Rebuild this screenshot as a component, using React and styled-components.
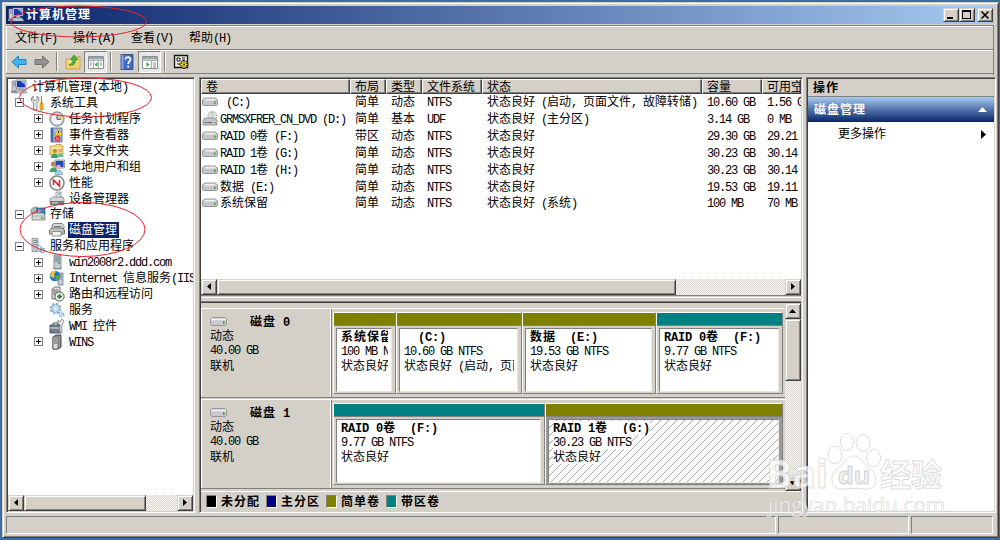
import React from "react";
import styled, { createGlobalStyle, css } from "styled-components";

const GlobalStyle = createGlobalStyle`
  * {
    box-sizing: border-box;
  }

  body {
    margin: 0;
    background: #3a6ea5;
    overflow: hidden;
  }
`;

const raised = css`
  background: #d4d0c8;
  border: 1px solid;
  border-color: #d4d0c8 #404040 #404040 #d4d0c8;
  box-shadow: inset 1px 1px 0 #fff, inset -1px -1px 0 #808080;
`;

const sunken = css`
  border: 1px solid;
  border-color: #808080 #fff #fff #808080;
  box-shadow: inset 1px 1px 0 #404040, inset -1px -1px 0 #d4d0c8;
  padding: 1px;
`;

const Desktop = styled.div`
  position: relative;
  width: 1000px;
  height: 540px;
  padding: 2px 1px 2px 2px;
  background: #3a6ea5;
  font-family: "Noto Sans CJK SC", sans-serif;
  font-size: 12px;
  line-height: 16px;
  color: #000;
  white-space: pre;
`;

const Window = styled.div`
  ${raised}
  height: 536px;
  padding: 3px 4px 3px 3px;
  display: flex;
  flex-direction: column;
`;

const Run = styled.span`
  display: block;
  width: fit-content;
  transform: translateY(-1px);
  letter-spacing: ${(p) => (p.$bold ? "1px" : "0")};
  font-weight: ${(p) => (p.$bold ? 700 : 400)};
`;

const Latin = styled.span`
  font-family: "Liberation Mono", monospace;
  font-size: 12px;
  line-height: 1;
  letter-spacing: ${(p) => (p.$bold ? "-0.2px" : "-1.2px")};
`;

const TitleBar = styled.div`
  height: 18px;
  display: flex;
  align-items: center;
  gap: 2px;
  padding: 0 1px 0 2px;
  color: #fff;
  background: linear-gradient(90deg, #0a246a, #a6caf0);
`;

const Controls = styled.div`
  margin-left: auto;
  display: flex;
`;

const ControlButton = styled.div`
  ${raised}
  width: 16px;
  height: 14px;
  margin-left: ${(p) => (p.$apart ? "2px" : "0")};

  svg {
    display: block;
  }
`;

const Bars = styled.div`
  margin-top: 1px;
  height: 50px;
  border-right: 1px solid #808080;
`;

const Bar = styled.div`
  height: ${(p) => p.$height}px;
  border-top: 1px solid #808080;
  border-bottom: ${(p) => (p.$last ? "1px solid #808080" : "none")};
  box-shadow: inset 1px 1px 0 #fff;
  display: flex;
  align-items: center;
  padding-left: 1px;
`;

const MenuItem = styled.div`
  width: 58px;
  padding-left: 8px;
`;

const ToolButton = styled.div`
  width: 23px;
  height: 22px;
  display: flex;
  align-items: center;
  justify-content: center;
  border: 1px solid;
  border-color: ${(p) => (p.$on ? "#808080 #fff #fff #808080" : "transparent")};
  background: ${(p) =>
    p.$on ? "repeating-conic-gradient(#fff 0 25%, #d9d6cf 0 50%) 0 0 / 2px 2px" : "none"};
`;

const Separator = styled.div`
  width: 2px;
  height: 19px;
  margin: 0 3px;
  border-left: 1px solid #808080;
  border-right: 1px solid #fff;
`;

const Panes = styled.div`
  display: grid;
  grid-template-columns: 189px 604px 188px;
  column-gap: 4px;
  height: 436px;
  margin-top: 2px;
`;

const TreePane = styled.div`
  ${sunken}
  background: #fff;
  display: flex;
  flex-direction: column;
`;

const TreeRows = styled.div`
  flex: 1;
  overflow: hidden;
`;

const TreeRow = styled.div`
  height: 15.95px;
  display: flex;
  align-items: center;
  padding-left: ${(p) => [3, 7, 26][p.$level]}px;

  > svg {
    flex: none;
    margin-right: ${(p) => (p.$level ? 3 : 4)}px;
  }
`;

const Expander = styled.div`
  flex: none;
  width: 9px;
  height: 9px;
  margin-right: 6px;
  border: 1px solid ${(p) => (p.$sign ? "#808080" : "transparent")};
  background:
    linear-gradient(#000, #000) center / ${(p) => (p.$sign ? "5px 1px" : "0 0")} no-repeat,
    linear-gradient(#000, #000) center / ${(p) => (p.$sign === "+" ? "1px 5px" : "0 0")} no-repeat;
`;

const TreeLabel = styled.div`
  padding: 0 2px 0 1px;
  height: 16px;
  background: ${(p) => (p.$selected ? "#0a246a" : "transparent")};
  color: ${(p) => (p.$selected ? "#fff" : "#000")};
`;

const ScrollTrack = styled.div`
  flex: none;
  display: flex;
  flex-direction: ${(p) => (p.$vertical ? "column" : "row")};
  ${(p) => (p.$vertical ? "width: 16px;" : "height: 16px;")}
  background: repeating-conic-gradient(#f4f3f0 0 25%, #dedbd5 0 50%) 0 0 / 2px 2px;
`;

const ScrollButton = styled.div`
  ${raised}
  flex: none;
  width: 16px;
  height: 16px;

  svg {
    display: block;
  }
`;

const ScrollThumb = styled.div`
  ${raised}
  flex: none;
  ${(p) => (p.$vertical ? `height: ${p.$size}px;` : `width: ${p.$size}px;`)}
`;

const Spring = styled.div`
  flex: 1;
`;

const MainPane = styled.div`
  ${sunken}
  background: #d4d0c8;
  display: flex;
  flex-direction: column;
  overflow: hidden;
`;

const Table = styled.div`
  height: 200px;
  flex: none;
  background: #fff;
  overflow: hidden;
`;

const TableRow = styled.div`
  display: grid;
  grid-template-columns: 149px 36px 36px 60px 220px 60px 39px;
  height: 16.85px;
`;

const HeaderRow = styled(TableRow)`
  height: 15px;
`;

const HeaderCell = styled.div`
  background: #d4d0c8;
  border: 1px solid;
  border-color: #fff #404040 #404040 #fff;
  box-shadow: inset -1px -1px 0 #808080;
  padding-left: 4px;
  line-height: 14px;
  overflow: hidden;
`;

const Cell = styled.div`
  display: flex;
  align-items: center;
  gap: 2px;
  padding-left: ${(p) => (p.$first ? 1 : 5)}px;
  overflow: hidden;

  svg {
    flex: none;
  }
`;

const Splitter = styled.div`
  flex: none;
  height: 8px;
  border-top: 1px solid #808080;
  border-bottom: 1px solid #404040;
  box-shadow: inset 0 -1px 0 #808080;
  padding-top: 1px;

  &::before {
    content: "";
    display: block;
    height: 1px;
    background: #fff;
  }
`;

const DiskArea = styled.div`
  height: 188px;
  flex: none;
  display: flex;
`;

const DiskList = styled.div`
  width: 584px;
  padding-top: 5px;
  display: flex;
  flex-direction: column;
  gap: 1px;
`;

const DiskRow = styled.div`
  height: 90px;
  display: flex;
  border-top: 1px solid #fff;
  border-bottom: 1px solid #808080;
`;

const DiskInfo = styled.div`
  width: 131px;
  padding: 5px 0 0 8px;
  border-left: 1px solid #fff;
  border-right: 1px solid #808080;
  box-shadow: inset -1px 0 0 #fff;
`;

const DiskName = styled.div`
  display: flex;
  align-items: center;
  gap: 23px;
  height: 15px;

  svg {
    flex: none;
  }
`;

const Line = styled.div`
  height: ${(p) => p.$height || 14}px;
  line-height: ${(p) => p.$height || 14}px;
`;

const Volumes = styled.div`
  display: flex;
  padding: 3px 0 3px 1px;
`;

const Volume = styled.div`
  width: ${(p) => p.$width}px;
  display: flex;
  flex-direction: column;
  border: 1px solid;
  border-color: #fff #808080 #808080 #fff;
  background: ${(p) => (p.$selected ? "#9c9993" : "#d4d0c8")};
`;

const VolumeBar = styled.div`
  height: 13px;
  flex: none;
  background: ${(p) => p.$color};
  border-bottom: 1px solid #808080;
`;

const VolumeBox = styled.div`
  flex: 1;
  margin: 2px 3px 1px 2px;
  border: 1px solid;
  border-color: #808080 #e8e6e1 #e8e6e1 #808080;
  padding: 1px 3px 0 4px;
  background: ${(p) =>
    p.$selected
      ? "repeating-linear-gradient(135deg, #fff 0 5.1px, #a8a8a8 5.1px 5.66px)"
      : "#fff"};
`;

const VolumeText = styled.div`
  overflow: hidden;

  > div > span {
    background: ${(p) => (p.$selected ? "#fff" : "none")};
  }
`;

const Legend = styled.div`
  flex: 1;
  border-top: 1px solid #fff;
  display: flex;
  align-items: center;
  padding-left: 5px;
`;

const LegendItem = styled.div`
  width: 60px;
  display: flex;
  align-items: center;
  gap: 4px;
`;

const Swatch = styled.div`
  width: 11px;
  height: 13px;
  background: ${(p) => p.$color};
  border: 1px solid;
  border-color: #808080 #fff #fff #808080;
`;

const ActionPane = styled.div`
  ${sunken}
  margin-left: -1px;
  margin-right: -1px;
  background: #fff;
`;

const ActionHeader = styled.div`
  height: 18px;
  padding: 1px 0 0 5px;
  background: #d4d0c8;
  border-bottom: 1px solid #808080;
`;

const ActionTitle = styled.div`
  height: 25px;
  display: flex;
  align-items: center;
  justify-content: space-between;
  padding: 0 7px 0 6px;
  color: #fff;
  background: linear-gradient(#a6caf0, #5673ab 50%, #0a246a);
`;

const ActionItem = styled.div`
  height: 24px;
  display: flex;
  align-items: center;
  justify-content: space-between;
  padding: 0 8px 0 30px;
`;

const StatusBar = styled.div`
  margin-top: 3px;
  height: 18px;
  display: grid;
  grid-template-columns: 770px 131px 82px;
  column-gap: 2px;
`;

const StatusCell = styled.div`
  border: 1px solid;
  border-color: #808080 #fff #fff #808080;
`;

const Overlay = styled.svg`
  position: absolute;
  left: 0;
  top: 0;
  pointer-events: none;
`;

// ASCII takes half the width of a Chinese character
const T = ({ children, bold }) => (
  <Run $bold={bold}>
    {children.split(/([\x20-\x7e]+)/).map((part, i) =>
      i % 2 ? (
        <Latin key={i} $bold={bold}>
          {part}
        </Latin>
      ) : (
        part
      )
    )}
  </Run>
);

const icons = {
  computer: (
    <>
      <path d="M1 2h5v10H1z" fill="#c9ccd0" stroke="#7b8088" strokeWidth=".7" />
      <path d="M2 4h3M2 6h3" stroke="#667" strokeWidth=".7" />
      <path d="M5 1h10v8H5z" fill="#dfe5ee" stroke="#6a7484" strokeWidth=".7" />
      <path d="M6 2h8v6H6z" fill="#1835b8" />
      <path d="M9 2h5v4z" fill="#7da4ee" />
      <path d="M8 9h4v2H8zM4 11h10l2 3H3z" fill="#c9ced6" stroke="#737a84" strokeWidth=".6" />
      <path d="M0 12h6v2H0z" fill="#8c9098" />
    </>
  ),
  tools: (
    <>
      <path d="M3 1v4l2 1 2-1V1l2 2v3L7 8v7H3.5V8L1.500 6V3z" fill="#e4e6e8" stroke="#777" strokeWidth=".8" />
      <path d="M11.500 1v8" stroke="#888" strokeWidth="1.200" />
      <path d="M10 8h3v6l-1.500 1.500L10 14z" fill="#f6b81c" stroke="#b67c05" strokeWidth=".7" />
    </>
  ),
  clock: (
    <>
      <circle cx="8" cy="8" r="7.200" fill="#b9bcc0" stroke="#777b82" strokeWidth=".8" />
      <circle cx="8" cy="8" r="5.500" fill="#f3f7fc" />
      <path d="M8 8V2.500A5.500 5.500 0 0 1 13.500 8z" fill="#f1c982" />
      <path d="M8 4v4.300h4" fill="none" stroke="#3b5a92" />
    </>
  ),
  event: (
    <>
      <path d="M2 1h11v14H2z" fill="#a9c3e6" stroke="#466ba5" strokeWidth=".9" />
      <path d="M2 1h2.500v14H2z" fill="#4d6fa7" />
      <path d="M9.500 1.500l4 6.500h-8z" fill="#ffdc38" stroke="#b18b00" strokeWidth=".6" />
      <path d="M9.500 4v2.500" stroke="#222" />
      <circle cx="8.500" cy="11.500" r="3" fill="#d9343a" />
      <path d="M7.300 10.300l2.400 2.400m0-2.400l-2.400 2.400" stroke="#fff" strokeWidth=".8" />
    </>
  ),
  shares: (
    <>
      <path d="M1 3h5l1-1.500h5V3h2v9H1z" fill="#f2d57b" stroke="#ba9230" strokeWidth=".7" />
      <path d="M2 5h11" stroke="#fff3bf" />
      <circle cx="6" cy="8" r="2" fill="#b98253" />
      <path d="M2 15c0-6 7-6 7 0z" fill="#37a66b" />
      <circle cx="11.500" cy="7.500" r="1.800" fill="#d9a77d" />
      <path d="M8.500 14c0-5 6-5 6 0z" fill="#72b9a4" />
    </>
  ),
  users: (
    <>
      <path d="M6 1h9.500v8H6z" fill="#d5deed" stroke="#65738d" strokeWidth=".7" />
      <path d="M7 2h7.500v6H7z" fill="#2246c0" />
      <circle cx="4.500" cy="5" r="2.600" fill="#b98253" />
      <path d="M.5 13c0-6 8-6 8 0z" fill="#3fa564" />
      <circle cx="9.500" cy="8" r="2.300" fill="#e0b792" />
      <path d="M6 15.500c0-6 7.500-6 7.500 0z" fill="#a6cfe9" stroke="#5b86ab" strokeWidth=".5" />
    </>
  ),
  perf: (
    <>
      <circle cx="8" cy="8" r="7" fill="#fff" stroke="#83868a" strokeWidth="1.600" />
      <path d="M4.500 10V5l6 6V5" fill="none" stroke="#cf252d" strokeWidth="1.600" />
    </>
  ),
  device: (
    <>
      <path d="M7 1h5v7H7z" fill="#e4e7eb" stroke="#7b8088" strokeWidth=".7" />
      <path d="M1 8l3-2h9l2 2v3H1z" fill="#d4d7da" stroke="#707478" strokeWidth=".7" />
      <path d="M1 10h14v4H1z" fill="#777b80" />
      <path d="M3 12h6" stroke="#e4e4e4" />
      <path d="M9 3h2" stroke="#3a7ad0" />
    </>
  ),
  storage: (
    <>
      <path d="M1 5c0-3 3-4 6-4v6H1z" fill="#aeb5bb" stroke="#727a80" strokeWidth=".7" />
      <path d="M7 2h8v6H7z" fill="#2f86c7" stroke="#1e5d92" strokeWidth=".7" />
      <path d="M8 3h5L8 7z" fill="#8fd2ee" />
      <path d="M2 9l2-2h9l2 2v5H2z" fill="#d9dbdc" stroke="#73777a" strokeWidth=".8" />
      <path d="M2 10h13" stroke="#999" strokeWidth=".6" />
      <path d="M11 12h2.500" stroke="#24b43b" strokeWidth="1.600" />
    </>
  ),
  disk: (
    <>
      <path d="M3 3l2-1.500h8l2 2V7H3z" fill="#d8d8d6" stroke="#6c6c6a" strokeWidth=".8" />
      <path d="M0.500 8L3 6h10l2.500 2v4H.5z" fill="#c4c4c2" stroke="#5f5f5e" strokeWidth=".8" />
      <path d="M3 9.500h9V14H3z" fill="#efefee" stroke="#707070" strokeWidth=".7" />
      <path d="M5 4.500h7" stroke="#777" />
      <path d="M13 10h1.500" stroke="#26a53a" />
    </>
  ),
  services: (
    <>
      <path d="M2 .5h6v13H2z" fill="#cdd2d6" stroke="#7b848c" strokeWidth=".7" />
      <path d="M3 2.500h4M3 4.500h4M3 6.500h4" stroke="#727f8b" strokeWidth=".8" />
      <path d="M6 4h1.500" stroke="#2fb645" />
      <circle cx="8" cy="10.500" r="3" fill="none" stroke="#8db2cf" strokeWidth="2" strokeDasharray="1.500 .8" />
      <circle cx="12.500" cy="12.500" r="2" fill="none" stroke="#6c9fc7" strokeWidth="2" strokeDasharray="1.200 .6" />
    </>
  ),
  server: (
    <>
      <path d="M5 1h7v14H5z" fill="#c6cdd0" stroke="#6d7880" strokeWidth=".8" />
      <path d="M6 3h5M6 5h5M6 7h5" stroke="#67777f" />
      <path d="M9 9h2" stroke="#29b13e" strokeWidth="1.500" />
      <path d="M4 14.500h9" stroke="#8a9298" />
    </>
  ),
  iis: (
    <>
      <path d="M9 3h5v12H9z" fill="#c3cad0" stroke="#6f7a84" strokeWidth=".8" />
      <path d="M10 5h3M10 7h3M10 9h3" stroke="#69747e" strokeWidth=".8" />
      <circle cx="6" cy="6" r="5.300" fill="#2673cf" />
      <path d="M2 3c2-3 5-2 5-1L5 4l1 2-2 2-3-2z" fill="#f0c22c" />
      <path d="M7 6l3-1 1 2-3 4-2-2z" fill="#4cae3f" />
    </>
  ),
  routing: (
    <>
      <path d="M3 3l3-2h5v12H3z" fill="#dfe0dd" stroke="#555" strokeWidth=".8" />
      <path d="M4 4h5M4 6h5M4 8h3" stroke="#666" />
      <circle cx="10.500" cy="10.500" r="4.600" fill="#fff" stroke="#4a4a4a" />
      <path d="M10.500 8v5M8 10.500h5" stroke="#23892e" strokeWidth="1.800" />
    </>
  ),
  gears: (
    <>
      <circle cx="6.500" cy="6.500" r="4.500" fill="none" stroke="#8db6d8" strokeWidth="3" strokeDasharray="2.200 1.300" />
      <circle cx="6.500" cy="6.500" r="3.800" fill="#e8f3fb" stroke="#79a5ca" />
      <circle cx="6.500" cy="6.500" r="1.800" fill="#fff" stroke="#8db0cc" strokeWidth=".7" />
      <circle cx="12.500" cy="12.500" r="2" fill="#e8f3fb" stroke="#8cb4d4" strokeWidth="2" strokeDasharray="1.300 .7" />
    </>
  ),
  wmi: (
    <>
      <path d="M1 7h11v8H1z" fill="#71808d" stroke="#3d4852" strokeWidth=".8" />
      <path d="M4 7V5h5v2" fill="none" stroke="#47525c" />
      <path d="M1 10h11" stroke="#dce2e7" />
      <path d="M9 2l2 2 2-3 2 2-2 4v8h-2V7L9 5z" fill="#e6e8ea" stroke="#777" strokeWidth=".7" />
    </>
  ),
  wins: (
    <>
      <path d="M4 3l3-2h5v12l-3 2H4z" fill="#9b9c9a" stroke="#222" strokeWidth=".8" />
      <path d="M4 3h5v12H4z" fill="#dcdcda" stroke="#444" strokeWidth=".7" />
      <path d="M5 5h3M5 7h3M5 9h3" stroke="#555" />
    </>
  ),
  volume: (
    <>
      <path d="M.5 7c0-2 2-3 3-3h9c1 0 3 1 3 3v3c0 .8-.6 1.500-1.500 1.500H2C1 11.500.5 11 .5 10z" fill="#c6c6ca" stroke="#828286" strokeWidth=".8" />
      <path d="M2 6c1-1 2-1.300 3-1.300h6c1 0 2 .3 3 1.300-1 .8-11 .8-12 0z" fill="#f0f0f2" />
      <path d="M12 7.500h1.500v2.500H12z" fill="#35a52d" />
    </>
  ),
  dvd: (
    <>
      <circle cx="10.500" cy="5" r="4.500" fill="#e2e2ec" stroke="#a4a4ae" strokeWidth=".7" />
      <path d="M10.500 5l-2-4 3-.5z" fill="#9fd4a7" />
      <circle cx="10.500" cy="5" r="1.200" fill="#fff" stroke="#999" strokeWidth=".5" />
      <path d="M1 9l2-2h9l3 2v5H1z" fill="#c4c4c8" stroke="#77777b" strokeWidth=".7" />
      <path d="M3 11.500h7" stroke="#555" strokeWidth="1.200" strokeDasharray="2 .5" />
      <path d="M12.500 11.500H14" stroke="#35a52d" />
    </>
  ),
  back: <path d="M1 8l6.500-6v3.500H15v5H7.500V14z" fill="#43b3ec" stroke="#2083c4" />,
  forward: <path d="M15 8L8.500 2v3.500H1v5h7.500V14z" fill="#929292" stroke="#707070" />,
  up: (
    <>
      <path d="M1 5h5l1.500-2H15v12H1z" fill="#f4cf71" stroke="#c7973a" strokeWidth=".8" />
      <path d="M2 7h12" stroke="#fff0ba" />
      <path d="M4 11c3-1 4-3 4-5H5.500L9 1l4 5h-2.500c0 4-2 6-6.500 5z" fill="#40b840" stroke="#258528" strokeWidth=".6" />
    </>
  ),
  paneLeft: (
    <>
      <path d="M.5 2.500h15v12H.5z" fill="#fff" stroke="#8a8f94" />
      <path d="M1 3h14v2.500H1z" fill="#9ba5ae" />
      <path d="M1 6.500h14M5.500 7v7M10.500 7v7" stroke="#a9b0b6" />
      <path d="M2 9h2M2 11h2M12 9h2M12 11h2" stroke="#7a8ea2" />
      <path d="M9.500 8v5l-3-2.500z" fill="#2faa37" />
    </>
  ),
  paneRight: (
    <>
      <path d="M.5 2.500h15v12H.5z" fill="#fff" stroke="#8a8f94" />
      <path d="M1 3h14v2.500H1z" fill="#9ba5ae" />
      <path d="M1 6.500h14M9.500 7v7" stroke="#a9b0b6" />
      <path d="M11 9h3M11 11h3M11 13h3" stroke="#7a8ea2" />
      <path d="M4.500 8v5l3-2.500z" fill="#2faa37" />
    </>
  ),
  help: (
    <>
      <path d="M2 .5h12v15H2z" fill="#4169c6" stroke="#26458c" strokeWidth=".8" />
      <path d="M2.500 1h2v14h-2z" fill="#89a8e4" />
      <path d="M6.500 5.500c0-3.500 5-3 5 0 0 2-2.300 2-2.300 4.500M9.200 11.500v2" fill="none" stroke="#fff" strokeWidth="1.800" />
    </>
  ),
  settings: (
    <>
      <path d="M1.500 1.500h13v12h-13z" fill="#efeee8" stroke="#111" strokeWidth="1.300" />
      <path d="M4 4h3v3H4zM9 4h3M9 6h3M4 10h3" fill="none" stroke="#222" />
      <path d="M11 6v9M6.500 10.500h9M8 7.500l6 6M14 7.500l-6 6" stroke="#222" strokeWidth="2.200" />
      <path d="M11 7v7M7.500 10.500h7M8.500 8l5 5M13.500 8l-5 5" stroke="#ffdf22" strokeWidth="1.200" />
      <circle cx="11" cy="10.500" r="1" fill="#222" />
    </>
  ),
};

const Icon = ({ name }) => (
  <svg width="16" height="16" viewBox="0 0 16 16">
    {icons[name]}
  </svg>
);

const DriveIcon = () => (
  <svg width="17" height="9" viewBox="0 0 17 9">
    <path d="M.5 2L2 .5h13L16.500 2v5.500L15 8.500H2L.5 7.500z" fill="#c9c9cd" stroke="#98989c" />
    <path d="M1 2.500h15" stroke="#f3f3f5" strokeWidth="1.500" />
    <path d="M13 4h1.500v3H13z" fill="#35b02d" />
  </svg>
);

const arrowPaths = {
  left: "M9 3v7L5 6.500z",
  right: "M5 3v7l4-3.500z",
  up: "M3 9h7L6.500 5z",
  down: "M3 5h7L6.500 9z",
};

const Arrow = ({ to }) => (
  <ScrollButton>
    <svg width="14" height="14">
      <path d={arrowPaths[to]} />
    </svg>
  </ScrollButton>
);

const menus = ["文件(F)", "操作(A)", "查看(V)", "帮助(H)"];

const tree = [
  [0, "", "computer", "计算机管理(本地)"],
  [1, "-", "tools", "系统工具"],
  [2, "+", "clock", "任务计划程序"],
  [2, "+", "event", "事件查看器"],
  [2, "+", "shares", "共享文件夹"],
  [2, "+", "users", "本地用户和组"],
  [2, "+", "perf", "性能"],
  [2, "", "device", "设备管理器"],
  [1, "-", "storage", "存储"],
  [2, "", "disk", "磁盘管理"],
  [1, "-", "services", "服务和应用程序"],
  [2, "+", "server", "win2008r2.ddd.com"],
  [2, "+", "iis", "Internet 信息服务(IIS)"],
  [2, "+", "routing", "路由和远程访问"],
  [2, "", "gears", "服务"],
  [2, "", "wmi", "WMI 控件"],
  [2, "+", "wins", "WINS"],
];

const columns = ["卷", "布局", "类型", "文件系统", "状态", "容量", "可用空间"];

const volumes = [
  [" (C:)", "简单", "动态", "NTFS", "状态良好 (启动, 页面文件, 故障转储)", "10.60 GB", "1.56 GB"],
  ["GRMSXFRER_CN_DVD (D:)", "简单", "基本", "UDF", "状态良好 (主分区)", "3.14 GB", "0 MB"],
  ["RAID 0卷 (F:)", "带区", "动态", "NTFS", "状态良好", "29.30 GB", "29.21"],
  ["RAID 1卷 (G:)", "简单", "动态", "NTFS", "状态良好", "30.23 GB", "30.14"],
  ["RAID 1卷 (H:)", "简单", "动态", "NTFS", "状态良好", "30.23 GB", "30.14"],
  ["数据 (E:)", "简单", "动态", "NTFS", "状态良好", "19.53 GB", "19.11"],
  ["系统保留", "简单", "动态", "NTFS", "状态良好 (系统)", "100 MB", "70 MB"],
];

const OLIVE = "#808000";
const TEAL = "#008080";

const disks = [
  {
    name: "磁盘 0",
    parts: [
      { width: 63, color: OLIVE, name: "系统保留", size: "100 MB NTFS", state: "状态良好" },
      { width: 126, color: OLIVE, name: "  (C:)", size: "10.60 GB NTFS", state: "状态良好 (启动, 页面文件" },
      { width: 134, color: OLIVE, name: "数据  (E:)", size: "19.53 GB NTFS", state: "状态良好" },
      { width: 127, color: TEAL, name: "RAID 0卷  (F:)", size: "9.77 GB NTFS", state: "状态良好" },
    ],
  },
  {
    name: "磁盘 1",
    parts: [
      { width: 212, color: TEAL, name: "RAID 0卷  (F:)", size: "9.77 GB NTFS", state: "状态良好" },
      { width: 238, color: OLIVE, name: "RAID 1卷  (G:)", size: "30.23 GB NTFS", state: "状态良好", selected: true },
    ],
  },
];

const legend = [
  ["#000", "未分配"],
  ["#000080", "主分区"],
  [OLIVE, "简单卷"],
  [TEAL, "带区卷"],
];

const Watermark = () => (
  <g fill="#fff" fillOpacity=".72" stroke="#c9c9c9" strokeOpacity=".65" strokeWidth="1">
    <ellipse cx="835" cy="455" rx="7" ry="9" />
    <ellipse cx="847" cy="442" rx="6.500" ry="8.500" />
    <ellipse cx="863" cy="443" rx="7" ry="8.500" />
    <ellipse cx="873.500" cy="458" rx="7" ry="8.500" />
    <path d="M854 456c-7 0-9 7-14 11-5 3-9 7-8 14 1 7 7 9 13 8 6-1 12-1 18 0 7 1 13-1 13-9 0-6-4-9-8-13-5-4-7-11-14-11z" />
    <g fontFamily="Open Sans, sans-serif">
      <text x="766" y="488" fontSize="39" fontWeight="700" textLength="62" lengthAdjust="spacingAndGlyphs">
        Bai
      </text>
      <text x="838" y="484" fontSize="24" fontWeight="700" fill="#eee" stroke="#bbb" textLength="32" lengthAdjust="spacingAndGlyphs">
        du
      </text>
      <text x="768" y="512" fontSize="20" textLength="177" lengthAdjust="spacingAndGlyphs" strokeWidth=".7">
        jingyan.baidu.com
      </text>
    </g>
    <text x="880" y="486" fontSize="31" fontWeight="700" fontFamily="Noto Sans CJK SC, sans-serif">
      经验
    </text>
  </g>
);

const App = () => {
  return (
    <Desktop>
      <GlobalStyle />
      <Window>
        <TitleBar>
          <Icon name="computer" />
          <T bold>计算机管理</T>
          <Controls>
            <ControlButton>
              <svg width="14" height="12">
                <path d="M3 8h6v2H3z" />
              </svg>
            </ControlButton>
            <ControlButton>
              <svg width="14" height="12">
                <path d="M2 1h9v9H2zM3 3v6h7V3z" fillRule="evenodd" />
              </svg>
            </ControlButton>
            <ControlButton $apart>
              <svg width="14" height="12">
                <path d="M3.500 2.500l7 7m0-7l-7 7" stroke="#000" strokeWidth="1.600" />
              </svg>
            </ControlButton>
          </Controls>
        </TitleBar>

        <Bars>
          <Bar $height={24}>
            {menus.map((menu) => (
              <MenuItem key={menu}>
                <T>{menu}</T>
              </MenuItem>
            ))}
          </Bar>
          <Bar $height={25} $last>
            <ToolButton><Icon name="back" /></ToolButton>
            <ToolButton><Icon name="forward" /></ToolButton>
            <Separator />
            <ToolButton><Icon name="up" /></ToolButton>
            <ToolButton $on><Icon name="paneLeft" /></ToolButton>
            <Separator />
            <ToolButton><Icon name="help" /></ToolButton>
            <ToolButton $on><Icon name="paneRight" /></ToolButton>
            <Separator />
            <ToolButton><Icon name="settings" /></ToolButton>
          </Bar>
        </Bars>

        <Panes>
          <TreePane>
            <TreeRows>
              {tree.map(([level, sign, icon, label]) => (
                <TreeRow key={label} $level={level}>
                  {level > 0 && <Expander $sign={sign} />}
                  <Icon name={icon} />
                  <TreeLabel $selected={label === "磁盘管理"}>
                    <T>{label}</T>
                  </TreeLabel>
                </TreeRow>
              ))}
            </TreeRows>
            <ScrollTrack>
              <Arrow to="left" />
              <ScrollThumb $size={122} />
              <Spring />
              <Arrow to="right" />
            </ScrollTrack>
          </TreePane>

          <MainPane>
            <Table>
              <HeaderRow>
                {columns.map((column) => (
                  <HeaderCell key={column}>
                    <T>{column}</T>
                  </HeaderCell>
                ))}
              </HeaderRow>
              {volumes.map((cells) => (
                <TableRow key={cells[0]}>
                  {cells.map((cell, i) => (
                    <Cell key={i} $first={i === 0}>
                      {i === 0 && <Icon name={cell.includes("DVD") ? "dvd" : "volume"} />}
                      <T>{cell}</T>
                    </Cell>
                  ))}
                </TableRow>
              ))}
            </Table>
            <ScrollTrack>
              <Arrow to="left" />
              <ScrollThumb $size={459} />
              <Spring />
              <Arrow to="right" />
            </ScrollTrack>
            <Splitter />
            <DiskArea>
              <DiskList>
                {disks.map((disk) => (
                  <DiskRow key={disk.name}>
                    <DiskInfo>
                      <DiskName>
                        <DriveIcon />
                        <T bold>{disk.name}</T>
                      </DiskName>
                      <Line><T>动态</T></Line>
                      <Line><T>40.00 GB</T></Line>
                      <Line $height={17}><T>联机</T></Line>
                    </DiskInfo>
                    <Volumes>
                      {disk.parts.map((part) => (
                        <Volume key={part.name} $width={part.width} $selected={part.selected}>
                          <VolumeBar $color={part.color} />
                          <VolumeBox $selected={part.selected}>
                            <VolumeText $selected={part.selected}>
                              <Line><T bold>{part.name}</T></Line>
                              <Line><T>{part.size}</T></Line>
                              <Line $height={16}><T>{part.state}</T></Line>
                            </VolumeText>
                          </VolumeBox>
                        </Volume>
                      ))}
                    </Volumes>
                  </DiskRow>
                ))}
              </DiskList>
              <ScrollTrack $vertical>
                <Arrow to="up" />
                <ScrollThumb $vertical $size={62} />
                <Spring />
                <Arrow to="down" />
              </ScrollTrack>
            </DiskArea>
            <Legend>
              {legend.map(([color, label]) => (
                <LegendItem key={label}>
                  <Swatch $color={color} />
                  <T bold>{label}</T>
                </LegendItem>
              ))}
            </Legend>
          </MainPane>

          <ActionPane>
            <ActionHeader>
              <T bold>操作</T>
            </ActionHeader>
            <ActionTitle>
              <T bold>磁盘管理</T>
              <svg width="9" height="5">
                <path d="M0 5h9L4.500 0z" fill="#fff" />
              </svg>
            </ActionTitle>
            <ActionItem>
              <T>更多操作</T>
              <svg width="5" height="9">
                <path d="M0 0v9l5-4.500z" />
              </svg>
            </ActionItem>
          </ActionPane>
        </Panes>

        <StatusBar>
          <StatusCell />
          <StatusCell />
          <StatusCell />
        </StatusBar>
      </Window>

      <Overlay width="1000" height="540">
        <g fill="none" stroke="#e8202a" strokeWidth="1">
          <ellipse cx="78.500" cy="21.500" rx="68" ry="15.500" />
          <ellipse cx="85.500" cy="97.500" rx="66" ry="19.500" />
          <ellipse cx="82.500" cy="229.500" rx="62.500" ry="27" />
        </g>
        <Watermark />
      </Overlay>
    </Desktop>
  );
};

export default App;
